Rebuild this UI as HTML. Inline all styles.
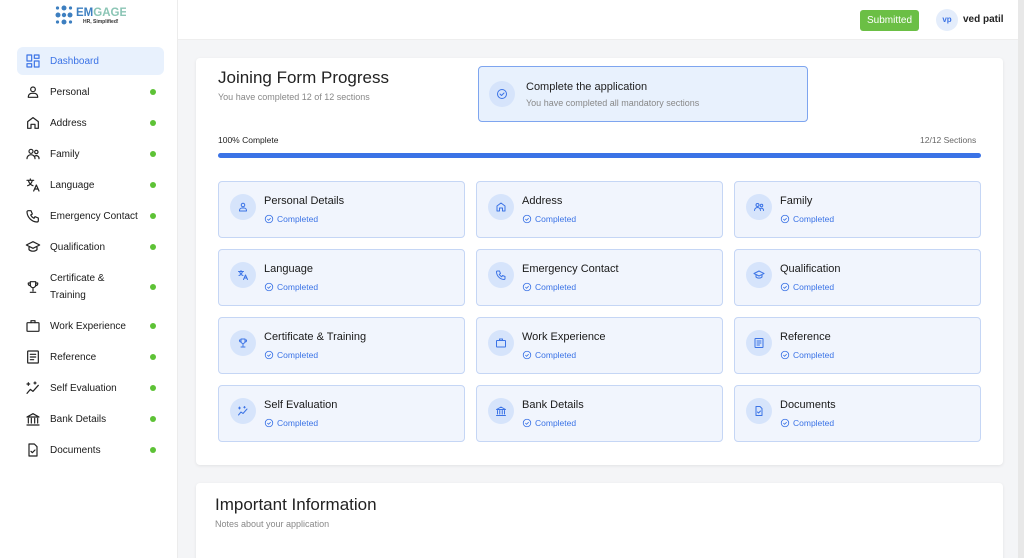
<!DOCTYPE html>
<html><head><meta charset="utf-8"><style>
*{box-sizing:border-box;margin:0;padding:0}
html,body{width:1024px;height:558px;overflow:hidden}
body{font-family:"Liberation Sans",sans-serif;background:#f4f5f7;position:relative;color:#222}
.side{position:absolute;left:0;top:0;width:178px;height:558px;background:#fff;border-right:1px solid #ececec}
.logo{position:absolute;left:54px;top:4px}
.nav{position:absolute;left:17px;width:147px;height:28px;display:flex;align-items:center;font-size:10px;color:#1a1a1a}
.nav svg{position:absolute;left:8px;width:16px;height:16px;fill:none;stroke:#222;stroke-width:1.8;stroke-linecap:round;stroke-linejoin:round}
.nav span{position:absolute;left:33px}
.nav i{position:absolute;left:133px;width:6px;height:6px;border-radius:50%;background:#5dc236}
.nav.act{background:#e8f1fd;border-radius:6px;color:#3b73e6}
.nav.act svg{stroke:#3b73e6}
.hdr{position:absolute;left:178px;top:0;right:6px;height:40px;background:#fff;border-bottom:1px solid #eee}
.sub{position:absolute;left:860px;top:10px;width:59px;height:21px;background:#6bbf45;border-radius:3px;color:#fff;font-size:10px;text-align:center;line-height:21px}
.av{position:absolute;left:936px;top:9px;width:22px;height:22px;border-radius:50%;background:#e4edfb;color:#3b73e6;font-size:8px;text-align:center;line-height:22px;font-weight:bold}
.uname{position:absolute;left:963px;top:14px;font-size:10px;font-weight:bold}
.card{position:absolute;left:196px;top:58px;width:807px;height:407px;background:#fff;border-radius:4px;box-shadow:0 1px 3px rgba(0,0,0,.08)}
.card2{position:absolute;left:196px;top:483px;width:807px;height:90px;background:#fff;border-radius:4px;box-shadow:0 1px 3px rgba(0,0,0,.08)}
.t{position:absolute;font-size:17px;color:#222}
.s{position:absolute;font-size:9px;color:#888}
.banner{position:absolute;left:478px;top:66px;width:330px;height:56px;background:#e8f1fd;border:1px solid #7ea5ef;border-radius:4px}
.ic{position:absolute;width:26px;height:26px;border-radius:50%;background:#d6e4fb;display:flex;align-items:center;justify-content:center}
.ic svg{width:12px;height:12px;fill:none;stroke:#3b73e6;stroke-width:2;stroke-linecap:round;stroke-linejoin:round}
.bar{position:absolute;left:218px;top:153px;width:763px;height:5px;background:#3b73e6;border-radius:3px}
.sc{position:absolute;width:247px;height:57px;background:#f1f5fd;border:1px solid #c5d6f5;border-radius:4px}
.sc .ic{left:11px;top:12px}
.sc b{position:absolute;left:45px;top:13px;font-size:11px;font-weight:normal;color:#1a1a1a}
.sc em{position:absolute;left:45px;top:32px;font-style:normal;font-size:8.5px;color:#3b73e6;display:flex;align-items:center;gap:3px}
.sc em svg{width:10px;height:10px;fill:none;stroke:#3b73e6;stroke-width:2}
.scroll{position:absolute;right:0;top:0;width:6px;height:558px;background:#e8e8e8}
</style></head><body>
<div class="side">
<div class="logo"><svg width="72" height="24" viewBox="0 0 72 24"><g fill="#3d7fc0"><circle cx="10" cy="4" r="2.5"/><circle cx="4" cy="11" r="2.5"/><circle cx="16" cy="11" r="2.5"/><circle cx="10" cy="18" r="2.5"/><circle cx="10" cy="11" r="2.2"/><circle cx="3.5" cy="4" r="1.6"/><circle cx="16.5" cy="4" r="1.6"/><circle cx="3.5" cy="18" r="1.6"/><circle cx="16.5" cy="18" r="1.6"/></g><text x="22" y="12" font-size="11.5" font-weight="bold" font-family="Liberation Sans" fill="#3d7fc0">EM<tspan fill="#8bc5b5">GAGE</tspan></text><text x="29" y="19" font-size="5" font-weight="bold" font-family="Liberation Sans" fill="#333">HR, Simplified!</text></svg></div>
<div class="nav act" style="top:47px"><svg viewBox="0 0 24 24"><rect x="3" y="3" width="7" height="9"/><rect x="14" y="3" width="7" height="5"/><rect x="14" y="12" width="7" height="9"/><rect x="3" y="16" width="7" height="5"/></svg><span>Dashboard</span></div>
<div class="nav" style="top:78px"><svg viewBox="0 0 24 24"><circle cx="12" cy="8" r="3.5"/><path d="M5 20v-1a5 5 0 0 1 5-5h4a5 5 0 0 1 5 5v1z"/></svg><span>Personal</span><i></i></div>
<div class="nav" style="top:109px"><svg viewBox="0 0 24 24"><path d="M4 20V10l8-6 8 6v10h-5v-6h-6v6z"/></svg><span>Address</span><i></i></div>
<div class="nav" style="top:140px"><svg viewBox="0 0 24 24"><circle cx="9" cy="8" r="3"/><circle cx="17" cy="9" r="2.5"/><path d="M3 19a6 6 0 0 1 12 0M15 15a4 4 0 0 1 6 4"/></svg><span>Family</span><i></i></div>
<div class="nav" style="top:171px"><svg viewBox="0 0 24 24"><path d="M3 5h10M8 3v2M5 5c1 4 4 7 7 8M11 5c-1 4-4 7-7 8M13 21l4-9 4 9M14.5 18h5"/></svg><span>Language</span><i></i></div>
<div class="nav" style="top:202px"><svg viewBox="0 0 24 24"><path d="M5 4h4l2 5-2.5 1.5a11 11 0 0 0 5 5L15 13l5 2v4a2 2 0 0 1-2 2A16 16 0 0 1 3 6a2 2 0 0 1 2-2"/></svg><span>Emergency Contact</span><i></i></div>
<div class="nav" style="top:233px"><svg viewBox="0 0 24 24"><path d="M2 9l10-5 10 5-10 5zM6 11v5c3 3 9 3 12 0v-5"/></svg><span>Qualification</span><i></i></div>
<div class="nav" style="top:270px;height:34px"><svg viewBox="0 0 24 24"><path d="M8 4h8v5a4 4 0 0 1-8 0zM8 6H5a3 3 0 0 0 3 4M16 6h3a3 3 0 0 1-3 4M12 13v5M8 20h8"/></svg><span style="line-height:17px">Certificate &amp;<br>Training</span><i></i></div>
<div class="nav" style="top:312px"><svg viewBox="0 0 24 24"><rect x="3" y="7" width="18" height="13" rx="1"/><path d="M9 7V4h6v3"/></svg><span>Work Experience</span><i></i></div>
<div class="nav" style="top:343px"><svg viewBox="0 0 24 24"><rect x="4" y="3" width="16" height="18" rx="1"/><path d="M8 8h8M8 12h8M8 16h5"/></svg><span>Reference</span><i></i></div>
<div class="nav" style="top:374px"><svg viewBox="0 0 24 24"><path d="M3 20l5-6 4 3 8-9M5 4v4M3 6h4M15 3v3M13.5 4.5h3"/></svg><span>Self Evaluation</span><i></i></div>
<div class="nav" style="top:405px"><svg viewBox="0 0 24 24"><path d="M3 9l9-5 9 5zM5 11v7M9.5 11v7M14.5 11v7M19 11v7M3 21h18"/></svg><span>Bank Details</span><i></i></div>
<div class="nav" style="top:436px"><svg viewBox="0 0 24 24"><path d="M6 3h8l4 4v14H6zM9 14l2 2 4-4"/></svg><span>Documents</span><i></i></div>
</div>
<div class="hdr"></div>
<div class="sub">Submitted</div><div class="av">vp</div><div class="uname">ved patil</div>
<div class="card"></div>
<div class="t" style="left:218px;top:68px">Joining Form Progress</div>
<div class="s" style="left:218px;top:92px">You have completed 12 of 12 sections</div>
<div class="banner"><div class="ic" style="left:10px;top:14px"><svg viewBox="0 0 24 24"><circle cx="12" cy="12" r="9"/><path d="M8 12l3 3 5-5"/></svg></div><div style="position:absolute;left:47px;top:14px;font-size:11px">Complete the application</div><div class="s" style="left:47px;top:31px;font-size:9px">You have completed all mandatory sections</div></div>
<div style="position:absolute;left:218px;top:135px;font-size:8.5px">100% Complete</div>
<div style="position:absolute;left:920px;top:135px;font-size:8.5px;color:#666">12/12 Sections</div>
<div class="bar"></div>

<div class="sc" style="left:218px;top:181px"><div class="ic"><svg viewBox="0 0 24 24"><circle cx="12" cy="8" r="3.5"/><path d="M5 20v-1a5 5 0 0 1 5-5h4a5 5 0 0 1 5 5v1z"/></svg></div><b>Personal Details</b><em><svg viewBox="0 0 24 24"><circle cx="12" cy="12" r="9"/><path d="M8 12l3 3 5-5"/></svg>Completed</em></div>
<div class="sc" style="left:476px;top:181px"><div class="ic"><svg viewBox="0 0 24 24"><path d="M4 20V10l8-6 8 6v10h-5v-6h-6v6z"/></svg></div><b>Address</b><em><svg viewBox="0 0 24 24"><circle cx="12" cy="12" r="9"/><path d="M8 12l3 3 5-5"/></svg>Completed</em></div>
<div class="sc" style="left:734px;top:181px"><div class="ic"><svg viewBox="0 0 24 24"><circle cx="9" cy="8" r="3"/><circle cx="17" cy="9" r="2.5"/><path d="M3 19a6 6 0 0 1 12 0M15 15a4 4 0 0 1 6 4"/></svg></div><b>Family</b><em><svg viewBox="0 0 24 24"><circle cx="12" cy="12" r="9"/><path d="M8 12l3 3 5-5"/></svg>Completed</em></div>

<div class="sc" style="left:218px;top:249px"><div class="ic"><svg viewBox="0 0 24 24"><path d="M3 5h10M8 3v2M5 5c1 4 4 7 7 8M11 5c-1 4-4 7-7 8M13 21l4-9 4 9M14.5 18h5"/></svg></div><b>Language</b><em><svg viewBox="0 0 24 24"><circle cx="12" cy="12" r="9"/><path d="M8 12l3 3 5-5"/></svg>Completed</em></div>
<div class="sc" style="left:476px;top:249px"><div class="ic"><svg viewBox="0 0 24 24"><path d="M5 4h4l2 5-2.5 1.5a11 11 0 0 0 5 5L15 13l5 2v4a2 2 0 0 1-2 2A16 16 0 0 1 3 6a2 2 0 0 1 2-2"/></svg></div><b>Emergency Contact</b><em><svg viewBox="0 0 24 24"><circle cx="12" cy="12" r="9"/><path d="M8 12l3 3 5-5"/></svg>Completed</em></div>
<div class="sc" style="left:734px;top:249px"><div class="ic"><svg viewBox="0 0 24 24"><path d="M2 9l10-5 10 5-10 5zM6 11v5c3 3 9 3 12 0v-5"/></svg></div><b>Qualification</b><em><svg viewBox="0 0 24 24"><circle cx="12" cy="12" r="9"/><path d="M8 12l3 3 5-5"/></svg>Completed</em></div>

<div class="sc" style="left:218px;top:317px"><div class="ic"><svg viewBox="0 0 24 24"><path d="M8 4h8v5a4 4 0 0 1-8 0zM8 6H5a3 3 0 0 0 3 4M16 6h3a3 3 0 0 1-3 4M12 13v5M8 20h8"/></svg></div><b>Certificate &amp; Training</b><em><svg viewBox="0 0 24 24"><circle cx="12" cy="12" r="9"/><path d="M8 12l3 3 5-5"/></svg>Completed</em></div>
<div class="sc" style="left:476px;top:317px"><div class="ic"><svg viewBox="0 0 24 24"><rect x="3" y="7" width="18" height="13" rx="1"/><path d="M9 7V4h6v3"/></svg></div><b>Work Experience</b><em><svg viewBox="0 0 24 24"><circle cx="12" cy="12" r="9"/><path d="M8 12l3 3 5-5"/></svg>Completed</em></div>
<div class="sc" style="left:734px;top:317px"><div class="ic"><svg viewBox="0 0 24 24"><rect x="4" y="3" width="16" height="18" rx="1"/><path d="M8 8h8M8 12h8M8 16h5"/></svg></div><b>Reference</b><em><svg viewBox="0 0 24 24"><circle cx="12" cy="12" r="9"/><path d="M8 12l3 3 5-5"/></svg>Completed</em></div>

<div class="sc" style="left:218px;top:385px"><div class="ic"><svg viewBox="0 0 24 24"><path d="M3 20l5-6 4 3 8-9M5 4v4M3 6h4M15 3v3M13.5 4.5h3"/></svg></div><b>Self Evaluation</b><em><svg viewBox="0 0 24 24"><circle cx="12" cy="12" r="9"/><path d="M8 12l3 3 5-5"/></svg>Completed</em></div>
<div class="sc" style="left:476px;top:385px"><div class="ic"><svg viewBox="0 0 24 24"><path d="M3 9l9-5 9 5zM5 11v7M9.5 11v7M14.5 11v7M19 11v7M3 21h18"/></svg></div><b>Bank Details</b><em><svg viewBox="0 0 24 24"><circle cx="12" cy="12" r="9"/><path d="M8 12l3 3 5-5"/></svg>Completed</em></div>
<div class="sc" style="left:734px;top:385px"><div class="ic"><svg viewBox="0 0 24 24"><path d="M6 3h8l4 4v14H6zM9 14l2 2 4-4"/></svg></div><b>Documents</b><em><svg viewBox="0 0 24 24"><circle cx="12" cy="12" r="9"/><path d="M8 12l3 3 5-5"/></svg>Completed</em></div>

<div class="card2"></div>
<div class="t" style="left:215px;top:495px">Important Information</div>
<div class="s" style="left:215px;top:519px">Notes about your application</div>
<div class="scroll"></div>
</body></html>
